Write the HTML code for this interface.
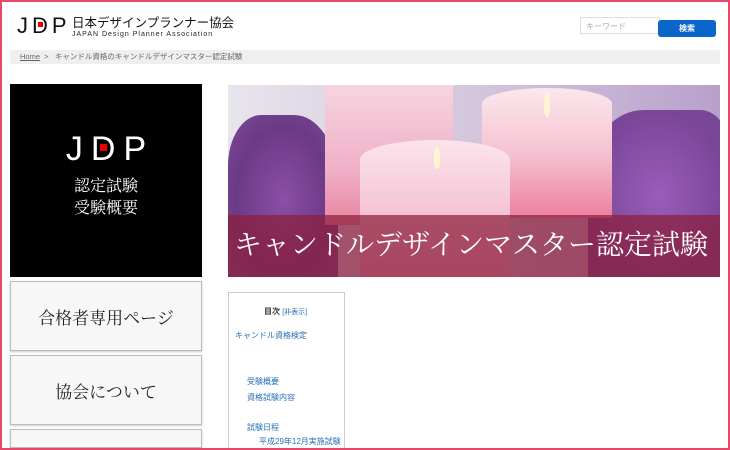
<!DOCTYPE html>
<html><head><meta charset="utf-8"><style>
*{margin:0;padding:0;box-sizing:border-box}
html,body{width:730px;height:450px;overflow:hidden}
body{background:#fff;font-family:"Liberation Sans","Noto Sans CJK JP",sans-serif;position:relative}
.frame{position:absolute;left:0;top:0;width:730px;height:450px;border:2px solid #e8476a;z-index:10;pointer-events:none}
.abs{position:absolute}
.serif{font-family:"Liberation Serif","Noto Serif CJK SC",serif}
.btn{position:absolute;left:10px;width:192px;height:70px;border:1px solid #bbb;background:#f7f7f7;box-shadow:0 1px 2px #ccc;display:flex;align-items:center;justify-content:center;font-size:17px;color:#222}
.toc a{color:#2a6fb8;font-size:8px;position:absolute;white-space:nowrap}
</style></head><body>
<div class="frame"></div>
<div class="abs" style="left:17px;top:14px;font-size:22px;letter-spacing:4px;color:#111;line-height:24px">J<span style="position:relative">D<span style="position:absolute;left:6px;top:9px;width:5px;height:5px;background:#e00"></span></span>P</div>
<div class="abs" style="left:72px;top:17px;font-size:12.5px;color:#111;line-height:13px">日本デザインプランナー協会</div>
<div class="abs" style="left:72px;top:31px;font-size:7px;color:#222;letter-spacing:1px">JAPAN Design Planner Association</div>
<div class="abs" style="left:580px;top:17px;width:80px;height:17px;border:1px solid #ddd;font-size:8px;color:#aaa;padding:3px 5px">キーワード</div>
<div class="abs" style="left:658px;top:20px;width:58px;height:17px;background:#0a66c8;border-radius:3px;color:#fff;font-size:8px;font-weight:bold;text-align:center;line-height:17px">検索</div>
<div class="abs" style="left:10px;top:50px;width:710px;height:14px;background:#f0efed;font-size:7.5px;color:#666;line-height:14px;padding-left:10px"><span style="text-decoration:underline">Home</span> &nbsp;&gt;&nbsp;&nbsp; キャンドル資格のキャンドルデザインマスター認定試験</div>
<div class="abs" style="left:10px;top:84px;width:192px;height:193px;background:#000;color:#fff;text-align:center">
<div style="margin-top:48px;font-size:34px;letter-spacing:8px;line-height:34px;position:relative;padding-left:8px">J<span style="position:relative">D<span style="position:absolute;left:9px;top:14px;width:7px;height:7px;background:#e00"></span></span>P</div>
<div class="serif" style="font-size:16px;line-height:22px;margin-top:10px">認定試験<br>受験概要</div></div>
<div class="btn serif" style="top:281px">合格者専用ページ</div>
<div class="btn serif" style="top:355px">協会について</div>
<div class="btn" style="top:429px;height:19px"></div>
<div class="abs" style="left:228px;top:85px;width:492px;height:192px;overflow:hidden;background:linear-gradient(90deg,#e8e4ec,#d8cde0 40%,#c9b8d6 70%,#b8a0cc)">
<div class="abs" style="left:0;top:30px;width:110px;height:170px;background:radial-gradient(ellipse,#8b4fa6,#6b3a86 60%,#7c4a96);border-radius:30% 40% 0 0"></div>
<div class="abs" style="left:360px;top:25px;width:140px;height:170px;background:radial-gradient(ellipse,#9a5db8,#7a4698 70%);border-radius:40% 20% 0 0"></div>
<div class="abs" style="left:97px;top:0;width:128px;height:140px;background:linear-gradient(#f6d4e0,#f0b0c8 60%,#e8849f)"></div>
<div class="abs" style="left:254px;top:3px;width:130px;height:130px;background:linear-gradient(#fbe8ec,#f5c2d2 50%,#ec7fa0);border-radius:50%/12% 12% 0 0"></div>
<div class="abs" style="left:132px;top:55px;width:150px;height:140px;background:linear-gradient(#fbe4ec,#f4bfd2 60%,#f0aac4);border-radius:50%/14% 14% 0 0"></div>
<div class="abs" style="left:206px;top:62px;width:6px;height:22px;background:#fff6d0;border-radius:50% 50% 40% 40%"></div>
<div class="abs" style="left:316px;top:8px;width:6px;height:24px;background:#fff6d0;border-radius:50% 50% 40% 40%"></div>
<div class="abs serif" style="left:0;top:130px;width:492px;height:62px;background:rgba(140,30,60,.72);color:#fff;font-size:28px;line-height:62px;padding-left:6px;white-space:nowrap">キャンドルデザインマスター認定試験</div>
</div>
<div class="abs toc" style="left:228px;top:292px;width:117px;height:158px;border:1px solid #ccc;border-bottom:none">
<div style="position:absolute;left:35px;top:13px;font-size:8px;font-weight:bold;color:#333">目次 <span style="font-weight:normal;color:#2a6fb8;font-size:7px">[非表示]</span></div>
<a style="left:6px;top:37px">キャンドル資格検定</a>
<a style="left:18px;top:83px">受験概要</a>
<a style="left:18px;top:99px">資格試験内容</a>
<a style="left:18px;top:129px">試験日程</a>
<a style="left:30px;top:143px">平成29年12月実施試験</a>
</div>
</body></html>
